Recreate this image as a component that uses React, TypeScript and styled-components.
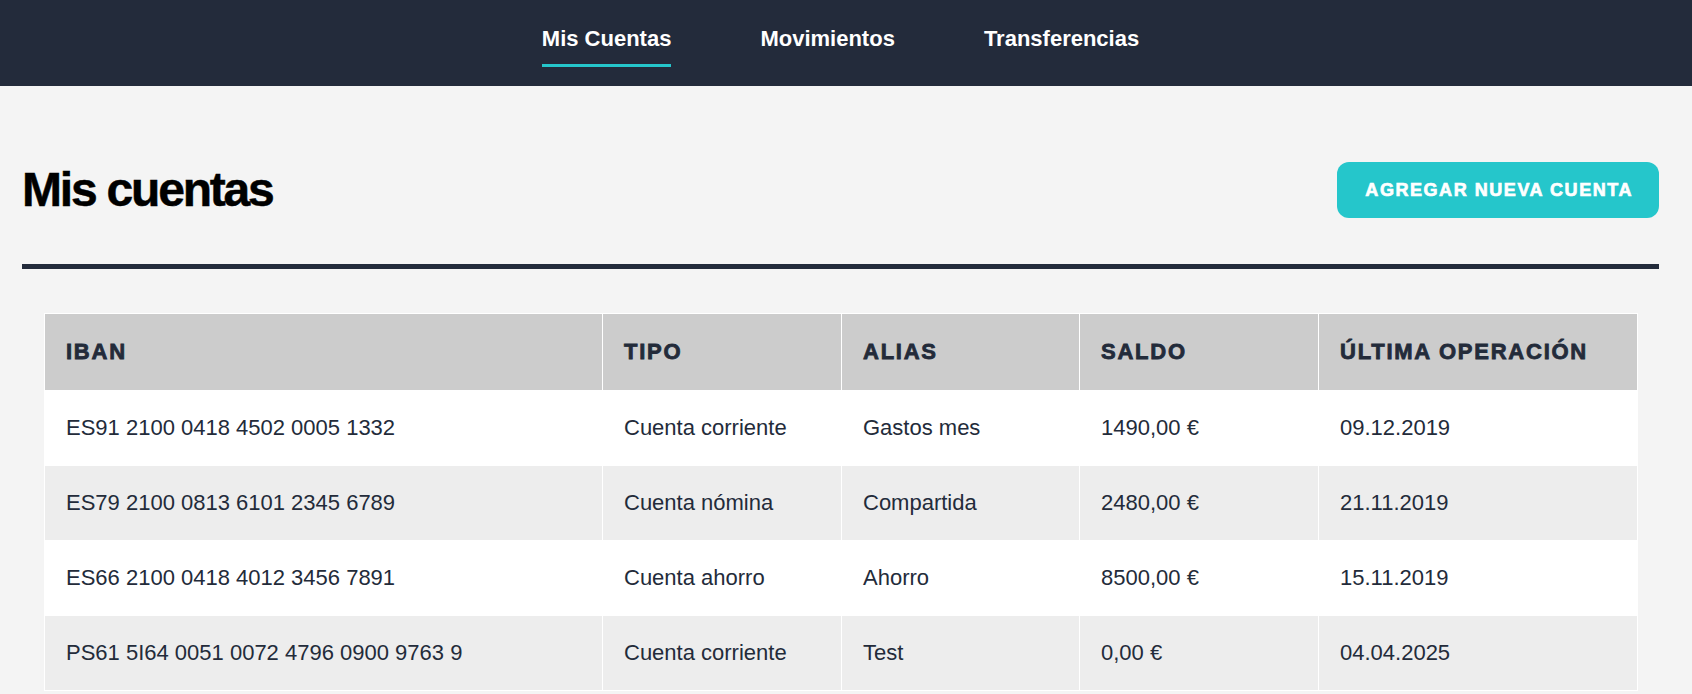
import React from "react";
import styled, { createGlobalStyle } from "styled-components";

const GlobalStyle = createGlobalStyle`
  html, body {
    margin: 0;
    padding: 0;
    background: #f4f4f4;
    font-family: "Liberation Sans", Arial, Helvetica, sans-serif;
    color: #232b3a;
  }
  * { box-sizing: border-box; }
`;

const NavBar = styled.nav`
  background: #232b3b;
  height: 86px;
  padding-right: 11px;
  display: flex;
  justify-content: center;
  align-items: flex-start;
  gap: 89px;
`;

const NavLink = styled.a<{ $active?: boolean }>`
  display: flex;
  flex-direction: column;
  gap: 12px;
  padding-top: 26px;
  color: #ffffff;
  font-size: 22px;
  line-height: 26px;
  font-weight: 700;
  text-decoration: none;
  cursor: pointer;

  &::after {
    content: "";
    display: block;
    height: 3px;
    background: ${(p) => (p.$active ? "#25c6cb" : "transparent")};
  }
`;

const Main = styled.main`
  padding: 76px 33px 0 22px;
`;

const HeaderRow = styled.div`
  display: flex;
  align-items: center;
  justify-content: space-between;
`;

const Title = styled.h1`
  margin: 0;
  font-size: 48px;
  line-height: 56px;
  font-weight: 700;
  letter-spacing: -2.2px;
  -webkit-text-stroke: 0.5px #000;
  color: #000;
`;

const AddButton = styled.button`
  height: 56px;
  padding: 0 26px 0 28px;
  border: none;
  border-radius: 12px;
  background: #25c6cb;
  color: #ffffff;
  font-family: "Liberation Sans", Arial, sans-serif;
  font-size: 18px;
  font-weight: 700;
  letter-spacing: 1.55px;
  -webkit-text-stroke: 0.7px #ffffff;
  cursor: pointer;
`;

const Divider = styled.hr`
  margin: 46px 0 0;
  border: none;
  height: 5px;
  background: #232b3b;
`;

const TableWrap = styled.div`
  padding: 44px 22px 0;
`;

const Table = styled.table`
  width: 100%;
  border-collapse: collapse;
  table-layout: fixed;
`;

const HeadCell = styled.th`
  background: #cccccc;
  border: 1px solid #ffffff;
  padding: 25px 21px 25px;
  height: 76px;
  text-align: left;
  font-size: 22px;
  line-height: 26px;
  font-weight: 700;
  letter-spacing: 1.75px;
  -webkit-text-stroke: 0.8px #232b3a;
  color: #232b3a;
  white-space: nowrap;
`;

const Row = styled.tr<{ $alt: boolean }>`
  background: ${(p) => (p.$alt ? "#ededed" : "#ffffff")};
`;

const Cell = styled.td`
  border: 1px solid #ffffff;
  padding: 24px 21px;
  height: 74px;
  font-size: 22px;
  line-height: 26px;
  color: #232b3a;
  white-space: nowrap;
`;

const columns = [
  { label: "IBAN", width: 558 },
  { label: "TIPO", width: 239 },
  { label: "ALIAS", width: 238 },
  { label: "SALDO", width: 239 },
  { label: "ÚLTIMA OPERACIÓN", width: 319 },
];

const accounts = [
  ["ES91 2100 0418 4502 0005 1332", "Cuenta corriente", "Gastos mes", "1490,00 €", "09.12.2019"],
  ["ES79 2100 0813 6101 2345 6789", "Cuenta nómina", "Compartida", "2480,00 €", "21.11.2019"],
  ["ES66 2100 0418 4012 3456 7891", "Cuenta ahorro", "Ahorro", "8500,00 €", "15.11.2019"],
  ["PS61 5I64 0051 0072 4796 0900 9763 9", "Cuenta corriente", "Test", "0,00 €", "04.04.2025"],
];

export default function App() {
  return (
    <>
      <GlobalStyle />
      <NavBar>
        <NavLink $active>Mis Cuentas</NavLink>
        <NavLink>Movimientos</NavLink>
        <NavLink>Transferencias</NavLink>
      </NavBar>
      <Main>
        <HeaderRow>
          <Title>Mis cuentas</Title>
          <AddButton>AGREGAR NUEVA CUENTA</AddButton>
        </HeaderRow>
        <Divider />
        <TableWrap>
          <Table>
            <colgroup>
              {columns.map((c) => (
                <col key={c.label} style={{ width: c.width }} />
              ))}
            </colgroup>
            <thead>
              <tr>
                {columns.map((c) => (
                  <HeadCell key={c.label}>{c.label}</HeadCell>
                ))}
              </tr>
            </thead>
            <tbody>
              {accounts.map((row, i) => (
                <Row key={row[0]} $alt={i % 2 === 1}>
                  {row.map((v, j) => (
                    <Cell key={j}>{v}</Cell>
                  ))}
                </Row>
              ))}
            </tbody>
          </Table>
        </TableWrap>
      </Main>
    </>
  );
}
